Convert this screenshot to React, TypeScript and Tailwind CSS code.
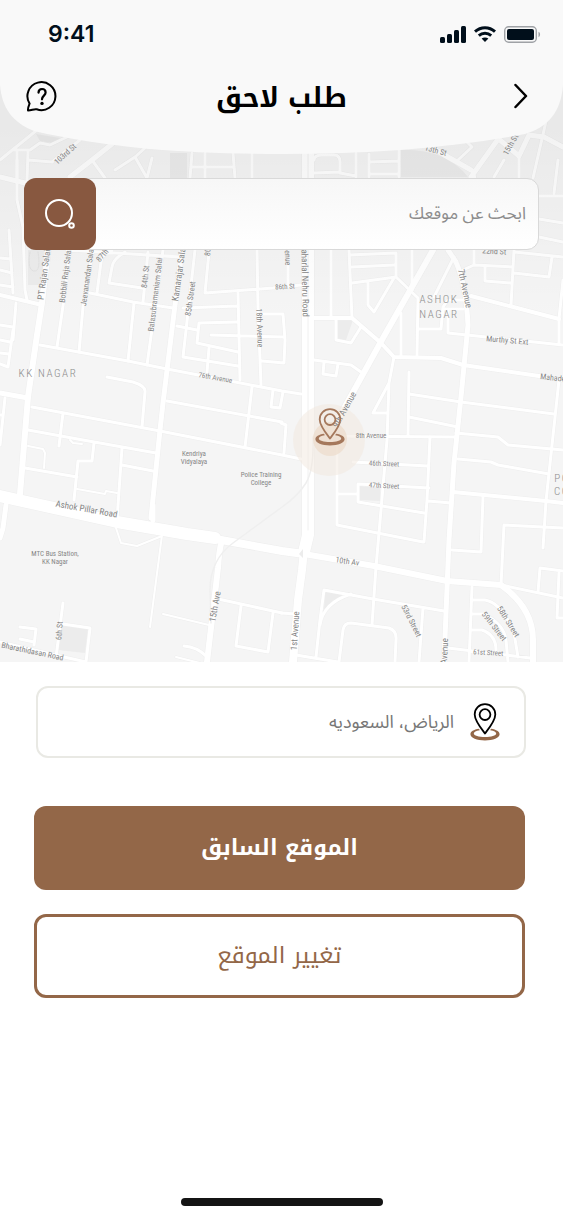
type Road = { d: string; w: number };

const roads: Road[] = [
  // north-west blocks, above the search field
  { w: 3, d: "M0 160L37 130 M13 150H30L40 143L50 145L67 137 M17 152V178 M28 152L27 180 M28 160L52 162L80 140 M92 160L105 178 M115 170L135 157L145 148 M135 157L147 178L152 158 M192 153L190 178 M205 153V178 M192 167H233 M233 153L235 178 M252 153V178" },
  { w: 5, d: "M70 177L92 160L112 144 M0 177L25 183" },
  // north-east blocks, above and right of the search field
  { w: 5, d: "M471 177L501 135 M424 143L448 157L471 170 M494 135L519 156L529 135L544 137L563 147" },
  { w: 3, d: "M314 160Q314 155 322 155H334Q340 155 340 162V172L314 173 M340 173L356 176 M356 153V177 M369 154V177 M399 150V177 M369 162L399 161 M369 174H399 M519 157V178 M504 160L494 177 M533 178L547 117 M554 193L558 160 M539 196H563 M539 219L563 223 M539 237L563 242 M465 140L472 147L458 160" },
  // west side
  { w: 3, d: "M17 160V200L23 227L25 290L27 300 M9 230L13 293 M0 258L11 259 M0 270L12 273 M0 285L13 287 M16 303L13 340 M0 325L13 327 M13 330L8 367L0 364 M0 340L10 342 M0 353L9 354 M5 398L0 445 M0 415H3" },
  { w: 3, d: "M67 250L180 257 M70 250L63 306L57 347 M93 250L83 307L79 352 M112 250Q102 254 101 262L97 293 M90 293L133 302L173 308 M125 252Q113 259 112 267L109 283L142 288 M148 252L143 302 M134 303L128 361 M163 250L147 365" },
  { w: 3, d: "M195 250L183 357L238 366 M183 308L237 306 M209 252L205 293L273 288L301 285 M177 326L197 330 M257 250L258 307L261 385 M238 293L240 380 M237 322L199 323L197 343L238 352 M211 335L284 337 M209 348L207 372 M262 314H283L285 340L284 363L262 361 M288 250V285" },
  { w: 3, d: "M40 345L128 361L167 369L282 391L301 394 M32 407L160 431L282 455L301 459 M167 401L282 422 M28 430L83 440L156 453 M122 465L153 471 M25 468L77 477 M107 377L133 382Q146 386 145 392L142 427 M63 413L59 446 M94 443L92 461H78L74 500 M122 448L117 520 M252 387L245 447 M273 390L271 407L280 408L283 392 M281 423L286 425L284 453" },
  { w: 2, d: "M77 489L105 494L106 491L117 493 M28 446L43 449L45 453L44 468 M70 440L73 443L82 444 M162 535L150 627 M115 525L121 543L137 546L162 536 M163 614L209 625 M176 657L200 663" },
  { w: 4, d: "M0 295L42 305" },
  { w: 5, d: "M0 393L28 398 M6 505L3 528L0 538 M153 505V520" },
  // centre and east
  { w: 3, d: "M331 250V317 M349 250L352 318 M349 255L396 253V277L418 298L417 355 M352 267L394 265 M352 283L396 277 M368 283V305L374 312L394 278 M412 250V290 M454 257L434 297 M401 313V355 M336 318V340L351 343L361 327 M418 329H441L443 307L448 300H465 M443 309H463" },
  { w: 4, d: "M314 318H352L381 343L394 357L441 358L463 365L539 376L563 380 M471 296L559 319" },
  { w: 3, d: "M448 310V333L563 345 M463 270L474 265L513 267 M474 250V265 M485 266V281L511 283 M514 250L511 305 M514 273L549 277L552 257 M514 252L563 257 M563 280L559 319V344" },
  { w: 3, d: "M314 360L351 365L361 372 M324 362L323 374L336 376L338 364 M394 357L389 383L387 440L381 510L376 567L372 625 M389 383L373 413H387 M409 372L408 435 M409 394L461 402L554 414 M409 417L458 427 M330 436L456 437 M456 433L498 437L508 445L563 450 M458 459L491 462L498 465L549 474" },
  { w: 3, d: "M353 462L428 466 M429 488L358 484V502L424 513 M430 437L427 500L424 542 M428 501L451 503 M483 497L481 552L452 550 M337 443V525L423 542 M337 494H358 M559 380L546 501L543 548 M504 525L563 528 M504 525L501 585 M538 592L540 568L563 571 M559 573L557 618H563" },
  { w: 4, d: "M453 492L546 501L563 503" },
  // southern blocks
  { w: 3, d: "M501 585L563 598 M324 590L373 599L444 611 M324 590L320 620L316 657 M351 594Q323 603 320 625 M339 662L343 630Q344 623 351 623L389 628Q397 631 396 640L395 662 M296 655L338 662 M423 608L419 662 M448 648L530 658 M472 587L469 662 M472 600H485Q502 603 514 633L518 657 M472 614H484Q504 624 506 640L508 662 M471 630H482Q496 635 496 650 M281 613L296 614" },
  { w: 3, d: "M218 599L282 613 M241 606L236 646L268 652L273 613 M184 646Q197 647 206 656 M63 603L56 657 M63 624L90 628L86 662 M20 627L36 629L34 645 M20 639L34 642 M0 642L64 657L86 662" },
  // main roads
  { w: 6, d: "M48 250L42 303L37 335L28 397L20 494" },
  { w: 5, d: "M182 250L175 305L163 403L160 430L151 518" },
  { w: 5, d: "M448 250L456 262Q466 285 468 325L461 397L454 463L449 540L444 662" },
  { w: 6, d: "M473 177L433 250L383 338L331 432" },
  { w: 12, d: "M0 496L117 522L187 534L215 538" },
  { w: 8, d: "M210 538L282 551L304 554" },
  { w: 6, d: "M304 554L374 566L447 581L501 585Q533 608 533 640V662" },
  { w: 6, d: "M222 540Q219 550 218 568L207 662" },
  { w: 12, d: "M308 150V535L304 552" },
  { w: 8, d: "M304 550L302 570L298 600L293 662" },
];

type Label = { t: string; x: number; y: number; r?: number; s?: number };

const labels: Label[] = [
  { t: "103rd St", x: 67, y: 156, r: -42, s: 8 },
  { t: "13th St", x: 435, y: 153, r: 15, s: 8 },
  { t: "15th St", x: 513, y: 146, r: -60, s: 8 },
  { t: "PT Rajan Salai", x: 47, y: 275, r: -82, s: 9 },
  { t: "Bobbili Raja Salai", x: 68, y: 276, r: -83, s: 8 },
  { t: "Jeevanandan Salai", x: 90, y: 277, r: -82, s: 8 },
  { t: "87th St", x: 107, y: 254, r: -50, s: 8 },
  { t: "84th St", x: 148, y: 277, r: -84, s: 8 },
  { t: "Balasubramaniam Salai", x: 158, y: 295, r: -83, s: 8 },
  { t: "Kamarajar Salai", x: 182, y: 274, r: -82, s: 9 },
  { t: "85th Street", x: 193, y: 299, r: -82, s: 8 },
  { t: "80th St", x: 211, y: 245, r: -85, s: 8 },
  { t: "18th Avenue", x: 257, y: 328, r: 88, s: 8 },
  { t: "86th St", x: 285, y: 289, r: -3 },
  { t: "Avenue", x: 285, y: 254, r: 88, s: 8 },
  { t: "Jawaharlal Nehru Road", x: 302, y: 276, r: 89, s: 9 },
  { t: "22nd St", x: 494, y: 254, r: 3, s: 8 },
  { t: "7th Avenue", x: 462, y: 289, r: 78, s: 9 },
  { t: "Murthy St Ext", x: 507, y: 343, r: 5, s: 8 },
  { t: "Mahadevan", x: 558, y: 381, r: 6, s: 8 },
  { t: "76th Avenue", x: 215, y: 380, r: 10 },
  { t: "9th Avenue", x: 347, y: 411, r: -61, s: 9 },
  { t: "8th Avenue", x: 371, y: 438 },
  { t: "46th Street", x: 384, y: 466, r: 2 },
  { t: "47th Street", x: 384, y: 488, r: 3 },
  { t: "Kendriya", x: 194, y: 456 },
  { t: "Vidyalaya", x: 194, y: 464 },
  { t: "Police Training", x: 261, y: 477 },
  { t: "College", x: 261, y: 485 },
  { t: "MTC Bus Station,", x: 55, y: 556 },
  { t: "KK Nagar", x: 55, y: 564 },
  { t: "Ashok Pillar Road", x: 86, y: 512, r: 10, s: 9 },
  { t: "10th Av", x: 347, y: 564, r: 8, s: 8 },
  { t: "15th Ave", x: 218, y: 607, r: -80, s: 9 },
  { t: "1st Avenue", x: 298, y: 631, r: -86, s: 9 },
  { t: "2nd Avenue", x: 447, y: 659, r: -87, s: 9 },
  { t: "53rd Street", x: 409, y: 622, r: 63, s: 8 },
  { t: "58th Street", x: 506, y: 623, r: 58, s: 8 },
  { t: "59th Street", x: 492, y: 628, r: 52, s: 8 },
  { t: "61st Street", x: 488, y: 655, r: 3 },
  { t: "6th St", x: 62, y: 631, r: -86, s: 8 },
  { t: "Bharathidasan Road", x: 32, y: 654, r: 12, s: 8 },
];

const districts: Label[] = [
  { t: "ASHOK", x: 439, y: 303 },
  { t: "NAGAR", x: 439, y: 318 },
  { t: "KK NAGAR", x: 48, y: 377 },
  { t: "POLICE", x: 575, y: 482 },
  { t: "COLONY", x: 577, y: 495 },
];

function PinIcon({ className, pin, base }: { className: string; pin: string; base: string }) {
  return (
    <svg viewBox="0 0 30 38" className={className} fill="none" aria-hidden="true">
      <path
        fill={base}
        fillRule="evenodd"
        d="M9 25.8C3.6 26.6 .4 28.700 .4 31.200C.4 34.700 7 37.400 15 37.400S29.600 34.700 29.600 31.200C29.600 28.700 26.400 26.600 21 25.800L20.200 27.200C24 27.800 26.200 29 26.200 30.400C26.200 32.500 21.200 34 15 34S3.800 32.500 3.800 30.400C3.800 29 6 27.800 9.800 27.200Z"
      />
      <path
        stroke={pin}
        strokeWidth="1.8"
        strokeLinejoin="round"
        d="M15 30.500C13.500 28.500 4.700 18 4.700 11.500C4.700 5.400 9.200 1.200 15 1.200S25.300 5.400 25.300 11.500C25.300 18 16.500 28.500 15 30.500Z"
      />
      <circle cx="15" cy="11.600" r="5.400" stroke={pin} strokeWidth="1.8" />
    </svg>
  );
}

function StreetMap() {
  return (
    <svg
      viewBox="0 0 563 662"
      preserveAspectRatio="xMidYMid slice"
      className="absolute inset-0 h-full w-full [direction:ltr]"
      role="img"
      aria-label="خريطة"
    >
      <defs>
        <linearGradient id="shade" x1="0" y1="0" x2="0" y2="1">
          <stop offset="0.19" stopColor="#000" stopOpacity="0.05" />
          <stop offset="0.27" stopColor="#000" stopOpacity="0.035" />
          <stop offset="0.48" stopColor="#000" stopOpacity="0" />
        </linearGradient>
      </defs>
      <rect width="563" height="662" fill="#f5f5f5" />
      <g fill="#ececec">
        <path d="M399 150Q445 148 468 177H399Z M170 153H187V178H170Z M36 134L60 138L52 143L40 141Z M28 250H48L42 285H28Z M336 320H353L346 340H336Z M60 625L88 629L85 653L58 650Z M325 591L345 595L324 610Z M360 486L380 488V501L360 500Z" />
      </g>
      <g fill="none" strokeLinecap="round" strokeLinejoin="round">
        {roads.map((road) => (
          <path key={road.d} d={road.d} stroke="#eeeeee" strokeWidth={road.w + 1} />
        ))}
        {roads.map((road) => (
          <path key={road.d} d={road.d} stroke="#ffffff" strokeWidth={road.w} />
        ))}
        <path d="M308 150V530" stroke="#f0f0f0" />
        <path
          d="M313 437Q314 470 306 483T282 507L233 543Q210 560 210 590L211 623"
          stroke="#efefef"
          strokeWidth="1.5"
        />
        <path d="M30 252Q27 270 34 271T38 252" stroke="#e2e2e2" strokeDasharray="2 1" />
      </g>
      <path d="M299 554L303 549V558Z" fill="#ececec" />
      <rect width="563" height="662" fill="url(#shade)" />
      <circle cx="329" cy="440" r="36" fill="#f1e8dd" fillOpacity="0.5" />
      <circle cx="330" cy="439" r="17" fill="#eddccb" fillOpacity="0.7" />
      <g className="font-['DIN_Condensed','Roboto_Condensed','Liberation_Sans_Narrow','Roboto',sans-serif]" textAnchor="middle">
        <g fill="#858585">
          {labels.map((l) => (
            <text key={l.t} fontSize={l.s ?? 7} transform={`translate(${l.x} ${l.y}) rotate(${l.r ?? 0})`}>
              {l.t}
            </text>
          ))}
        </g>
        <g fill="#8c8c8c" className="font-light tracking-widest">
          {districts.map((l) => (
            <text key={l.t} x={l.x} y={l.y} fontSize="11">
              {l.t}
            </text>
          ))}
        </g>
      </g>
      <svg x="315" y="408" width="30" height="38">
        <PinIcon className="h-[38px] w-[30px]" pin="#a5785c" base="#a5785c" />
      </svg>
    </svg>
  );
}

function StatusBar() {
  return (
    <div dir="ltr" className="flex h-[68px] items-center justify-between pr-[22px] pl-12">
      <span className="font-['Inter',sans-serif] text-[23px] font-semibold text-[#010f1b]">9:41</span>
      <div className="flex items-center gap-2">
        <svg width="26" height="17" viewBox="0 0 26 17" fill="#010f1b" aria-hidden="true">
          <rect x="0" y="11" width="5" height="6" rx="1.5" />
          <rect x="7" y="8" width="5" height="9" rx="1.5" />
          <rect x="14" y="4" width="5" height="13" rx="1.5" />
          <rect x="21" y="0" width="5" height="17" rx="1.5" />
        </svg>
        <svg width="22" height="16" viewBox="0 0 22 16" fill="none" stroke="#010f1b" strokeWidth="3" aria-hidden="true">
          <path d="M1 5.600C6.800 .3 15.200 .3 21 5.600" />
          <path d="M4.800 9.600C8.400 6.500 13.600 6.500 17.200 9.600" />
          <path d="M7.600 12.600C9.600 11 12.400 11 14.400 12.600L11 16Z" fill="#010f1b" stroke="none" />
        </svg>
        <svg width="37" height="17" viewBox="0 0 37 17" fill="none" aria-hidden="true">
          <rect x="0.700" y="0.700" width="31.600" height="15.600" rx="4" stroke="#9fa2a6" strokeWidth="1.400" />
          <rect x="3" y="3" width="27" height="11" rx="2" fill="#010f1b" />
          <path d="M34.500 5.800C36.600 6.500 36.600 10.500 34.500 11.200Z" fill="#9fa2a6" />
        </svg>
      </div>
    </div>
  );
}

export default function App() {
  return (
    <div
      dir="rtl"
      className="flex min-h-screen flex-col bg-white font-['Noto_Sans_Arabic','DejaVu_Sans',sans-serif]"
    >
      <section className="relative flex min-h-[662px] flex-col overflow-hidden">
        <StreetMap />

        <header className="relative h-[154px]">
          <svg
            viewBox="0 0 563 154"
            preserveAspectRatio="none"
            className="absolute inset-0 h-full w-full"
            aria-hidden="true"
          >
            <path
              fill="#f9f9f9"
              d="M0 0H563V85C561 112 548 127 525 134C450 148 370 154 282 154C195 154 112 149 34 131C12 122 2 108 0 85Z"
            />
          </svg>
          <div className="relative">
            <StatusBar />
            <div className="flex h-14 items-center justify-between px-6">
              <button type="button" aria-label="رجوع" className="flex h-9 w-9 items-center justify-center">
                <svg width="14" height="26" viewBox="0 0 14 26" fill="none" stroke="#000" strokeWidth="2.500" aria-hidden="true">
                  <path d="M1.500 2L12 13L1.500 24" strokeLinecap="round" strokeLinejoin="round" />
                </svg>
              </button>
              <h1 className="pt-1 font-['Noto_Kufi_Arabic','DejaVu_Sans',sans-serif] text-[27px] leading-9 font-bold text-black">
                طلب لاحق
              </h1>
              <button type="button" aria-label="مساعدة" className="flex h-9 w-9 items-center justify-center">
                <svg width="32" height="32" viewBox="0 0 32 32" fill="none" stroke="#000" strokeWidth="2" aria-hidden="true">
                  <path
                    strokeLinejoin="round"
                    d="M2 30.500C1.700 27.800 2.800 25.600 3.600 23.600A14 14 0 1 1 10.700 29.300C8 28.600 5.500 30.600 2 30.500Z"
                  />
                  <path strokeWidth="2.200" strokeLinecap="round" d="M12.500 12.600C12.600 10.300 14 9 16 9S19.600 10.400 19.600 12.500C19.600 15.600 16 15.700 16 19.300" />
                  <circle cx="16" cy="23.400" r="1.700" fill="#000" stroke="none" />
                </svg>
              </button>
            </div>
          </div>
        </header>

        <form
          className="relative mx-6 mt-6 flex h-[72px] items-center rounded-xl border border-[#d9d9d9] bg-linear-to-b from-[#f7f7f7] to-white"
          onSubmit={(e) => e.preventDefault()}
        >
          <input
            type="search"
            aria-label="ابحث عن موقعك"
            placeholder="ابحث عن موقعك"
            className="h-full min-w-0 flex-1 bg-transparent px-3 text-[17px] text-[#555] outline-none placeholder:text-[#8c8c8c]"
          />
          <button
            type="submit"
            aria-label="بحث"
            className="-my-px -ml-px flex h-[72px] w-[72px] items-center justify-center rounded-xl bg-[#885840]"
          >
            <svg width="34" height="34" viewBox="0 0 34 34" fill="none" stroke="#fff" strokeWidth="2" aria-hidden="true">
              <circle cx="16" cy="16" r="13" />
              <circle cx="28.500" cy="28.500" r="2.300" />
            </svg>
          </button>
        </form>
      </section>

      <main className="flex flex-1 flex-col pt-6 pr-[38px] pl-[34px]">
        <div className="-mr-px ml-0.5 flex h-[72px] items-center gap-4 rounded-xl border-2 border-[#e9e9e4] px-6">
          <PinIcon className="h-[38px] w-[30px] shrink-0" pin="#000" base="#936748" />
          <p className="text-lg text-[#777]">الرياض، السعوديه</p>
        </div>
        <button
          type="button"
          className="mt-12 h-[84px] rounded-xl bg-[#936748] font-['Noto_Kufi_Arabic','DejaVu_Sans',sans-serif] text-[22px] font-bold text-white"
        >
          الموقع السابق
        </button>
        <button
          type="button"
          className="mt-6 h-[84px] rounded-xl border-3 border-[#936748] font-['Noto_Kufi_Arabic','DejaVu_Sans',sans-serif] text-[23px] text-[#936748]"
        >
          تغيير الموقع
        </button>
      </main>

      <footer className="flex justify-center pb-3">
        <div className="h-2 w-[202px] rounded-full bg-[#141414]" />
      </footer>
    </div>
  );
}
